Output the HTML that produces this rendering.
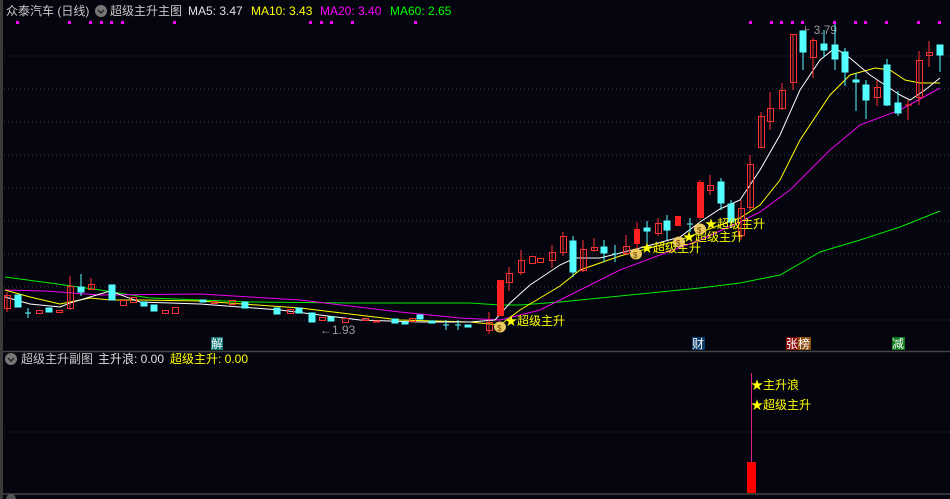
<!DOCTYPE html>
<html><head><meta charset="utf-8"><style>
html,body{margin:0;padding:0;background:#05050f;width:950px;height:499px;overflow:hidden}
svg{display:block}
text{font-family:"Liberation Sans","Noto Sans CJK SC",sans-serif}
</style></head><body>
<svg width="950" height="499" viewBox="0 0 950 499" xmlns="http://www.w3.org/2000/svg">
<rect width="950" height="499" fill="#05050f"/>
<rect x="0" y="0" width="3" height="499" fill="#3a3a3a"/>
<g stroke="#3a3a44" stroke-dasharray="1 3" stroke-width="1">
<line x1="4" y1="56" x2="950" y2="56"/><line x1="4" y1="89" x2="950" y2="89"/><line x1="4" y1="122" x2="950" y2="122"/><line x1="4" y1="155" x2="950" y2="155"/><line x1="4" y1="188" x2="950" y2="188"/><line x1="4" y1="221" x2="950" y2="221"/><line x1="4" y1="254" x2="950" y2="254"/><line x1="4" y1="287" x2="950" y2="287"/><line x1="4" y1="320" x2="950" y2="320"/><line x1="4" y1="432" x2="950" y2="432"/>
</g>
<line x1="3" y1="351.5" x2="950" y2="351.5" stroke="#444" stroke-width="1.5"/>
<line x1="3" y1="494" x2="950" y2="494" stroke="#444" stroke-width="1.5"/>

<!-- header -->
<text x="6" y="15" font-size="12" fill="#c8c8c8">众泰汽车 (日线)</text>
<circle cx="101" cy="11" r="6" fill="#777"/><path d="M98 10 L101 13 L104 10" stroke="#222" stroke-width="1.5" fill="none"/>
<text x="110" y="15" font-size="12" fill="#c8c8c8">超级主升主图</text>
<text x="188" y="15" font-size="12" fill="#e0e0e0">MA5: 3.47</text>
<text x="251" y="15" font-size="12" fill="#ffff00">MA10: 3.43</text>
<text x="320" y="15" font-size="12" fill="#ff00ff">MA20: 3.40</text>
<text x="390" y="15" font-size="12" fill="#00ff00">MA60: 2.65</text>
<g fill="#ff00ff">
<rect x="16" y="21" width="3" height="3"/><rect x="68" y="21" width="3" height="3"/><rect x="89" y="21" width="3" height="3"/><rect x="100" y="21" width="3" height="3"/><rect x="110" y="21" width="3" height="3"/><rect x="121" y="21" width="3" height="3"/><rect x="173" y="21" width="3" height="3"/><rect x="309" y="21" width="3" height="3"/><rect x="320" y="21" width="3" height="3"/><rect x="330" y="21" width="3" height="3"/><rect x="351" y="21" width="3" height="3"/><rect x="414" y="21" width="3" height="3"/>
<rect x="749" y="21" width="3" height="3"/><rect x="770" y="21" width="3" height="3"/><rect x="780" y="21" width="3" height="3"/><rect x="791" y="21" width="3" height="3"/><rect x="801" y="21" width="3" height="3"/><rect x="833" y="21" width="3" height="3"/><rect x="854" y="21" width="3" height="3"/><rect x="864" y="21" width="3" height="3"/><rect x="885" y="21" width="3" height="3"/><rect x="917" y="21" width="3" height="3"/><rect x="938" y="21" width="3" height="3"/>
</g>
<text x="804" y="34" font-size="12" fill="#999">⊦ 3.79</text>
<text x="320" y="334" font-size="12" fill="#999">←1.93</text>

<!-- MA lines -->
<polyline fill="none" stroke="#00ee00" stroke-width="1" points="5,277 50,283 100,290 150,298 250,302 350,303 470,303 500,305 520,305 560,302 600,298 650,293 700,288 740,283 780,275 820,252 860,240 900,227 940,211"/>
<polyline fill="none" stroke="#ee00ee" stroke-width="1" points="5,290 45,291 100,295 200,294 300,300 400,312 460,318 500,320 540,310 580,290 620,270 660,255 700,240 740,222 760,212 790,190 830,150 860,125 900,110 940,88"/>
<polyline fill="none" stroke="#ffff00" stroke-width="1" points="5,290 30,297 60,304 90,298 110,300 140,300 200,301 300,308 400,320 470,322 500,325 520,310 560,286 580,270 620,256 680,240 720,225 740,218 760,205 780,180 800,140 830,95 850,75 875,68 890,70 905,80 920,83 940,83"/>
<polyline fill="none" stroke="#ffffff" stroke-width="1" points="5,297 30,304 60,307 70,303 90,297 110,291 140,302 200,304 280,310 320,315 360,320 420,322 470,322 495,320 510,303 530,285 560,265 575,258 600,258 640,248 680,237 700,222 720,209 740,200 760,170 780,135 800,90 820,60 835,48 850,58 870,75 900,95 910,100 925,90 940,78"/>

<!-- candles: red hollow -->
<g stroke="#ff3232" fill="none" stroke-width="1">
<path d="M7 292V312"/><rect x="4.5" y="295.5" width="6" height="13"/>
<rect x="36.5" y="310.5" width="6" height="3"/><rect x="56.5" y="310.5" width="6" height="2"/>
<path d="M70 276V310"/><rect x="67.5" y="286.5" width="6" height="22"/>
<path d="M91 278V290"/><rect x="88.5" y="284.5" width="6" height="5"/>
<rect x="120.5" y="300.5" width="6" height="5"/><rect x="130.5" y="297.5" width="6" height="5"/>
<rect x="162.5" y="310.5" width="6" height="3"/><rect x="172.5" y="307.5" width="6" height="6"/>
<rect x="211.5" y="301.5" width="6" height="2"/><rect x="229.5" y="300.5" width="6" height="4"/>
<rect x="287.5" y="309.5" width="6" height="4"/><rect x="319.5" y="317.5" width="6" height="3"/>
<rect x="342.5" y="318.5" width="6" height="4"/><rect x="362.5" y="318.5" width="6" height="2"/>
<rect x="373.5" y="321" width="6" height="1"/><rect x="409.5" y="318.5" width="6" height="3"/>
<path d="M489 312V334"/><rect x="486.5" y="322.5" width="6" height="8"/>
<path d="M509 267V291"/><rect x="506.5" y="273.5" width="6" height="9"/>
<path d="M521 250V275"/><rect x="518.5" y="260.5" width="6" height="12"/>
<rect x="529.5" y="256.5" width="6" height="7"/><rect x="537.5" y="258.5" width="6" height="4"/>
<path d="M552 245V268"/><rect x="549.5" y="252.5" width="6" height="8"/>
<path d="M563 232V256"/><rect x="560.5" y="236.5" width="6" height="16"/>
<path d="M583 240V272"/><rect x="580.5" y="249.5" width="6" height="21"/>
<path d="M594 238V252"/><rect x="591.5" y="247.5" width="6" height="3"/>
<path d="M626 235V255"/><rect x="623.5" y="246.5" width="6" height="7"/>
<path d="M658 218V236"/><rect x="655.5" y="223.5" width="6" height="10"/>
<path d="M710 175V195"/><rect x="707.5" y="185.5" width="6" height="5"/>
<path d="M741 200V240"/><rect x="738.5" y="208.5" width="6" height="27"/>
<path d="M750 155V210"/><rect x="747.5" y="164.5" width="6" height="43"/>
<path d="M761 112V148"/><rect x="758.5" y="116.5" width="6" height="31"/>
<path d="M770 92V130"/><rect x="767.5" y="108.5" width="6" height="13"/>
<path d="M782 83V110"/><rect x="779.5" y="90.5" width="6" height="18"/>
<path d="M793 34V90"/><rect x="790.5" y="34.5" width="6" height="48"/>
<path d="M813 38V78"/><rect x="810.5" y="40.5" width="6" height="17"/>
<path d="M877 80V106"/><rect x="874.5" y="87.5" width="6" height="10"/>
<path d="M908 100V120M905 105H912"/>
<path d="M919 51V105"/><rect x="916.5" y="60.5" width="6" height="37"/>
<path d="M929 41V67"/><rect x="926.5" y="52.5" width="6" height="3"/>
</g>
<!-- red filled -->
<g fill="#ff2020">
<rect x="497" y="280" width="7" height="36"/><rect x="634" y="229" width="6" height="15"/><path d="M637 222V250" stroke="#ff2020"/>
<rect x="675" y="216" width="6" height="10"/><rect x="697" y="182" width="7" height="36"/><path d="M700 180V220" stroke="#ff2020"/>
</g>
<!-- cyan -->
<g fill="#54ffff" stroke="#54ffff" stroke-width="1">
<rect x="15" y="295" width="6" height="12"/><path d="M28 308V318M25 313H31" fill="none"/>
<rect x="46" y="308" width="6" height="4"/>
<path d="M81 274V296" fill="none"/><rect x="78" y="287" width="6" height="5"/>
<rect x="109" y="285" width="6" height="15"/><rect x="141" y="302" width="6" height="4"/><rect x="151" y="305" width="6" height="6"/>
<rect x="200" y="300" width="6" height="2"/><rect x="242" y="302" width="6" height="6"/><rect x="274" y="308" width="6" height="6"/>
<rect x="296" y="308" width="6" height="5"/><rect x="309" y="313" width="6" height="9"/><rect x="328" y="317" width="6" height="4"/>
<rect x="392" y="319" width="6" height="4"/><rect x="402" y="322" width="6" height="2"/><rect x="417" y="315" width="6" height="4"/>
<rect x="429" y="321" width="6" height="2"/><path d="M446 320V330M443 325H449M458 320V330M455 325H461" fill="none"/><rect x="465" y="325" width="6" height="2"/>
<path d="M573 236V277" fill="none"/><rect x="570" y="241" width="6" height="31"/>
<path d="M604 240V262" fill="none"/><rect x="601" y="247" width="6" height="6"/>
<path d="M615 245V262M612 254H618" fill="none"/>
<path d="M647 221V245" fill="none"/><rect x="644" y="228" width="6" height="3"/>
<path d="M667 215V240" fill="none"/><rect x="664" y="221" width="6" height="9"/>
<path d="M690 218V232M687 224H693" fill="none"/>
<path d="M721 178V210" fill="none"/><rect x="718" y="182" width="6" height="21"/>
<path d="M731 200V228" fill="none"/><rect x="728" y="204" width="6" height="18"/>
<path d="M803 30V70" fill="none"/><rect x="800" y="31" width="6" height="21"/>
<path d="M824 30V57" fill="none"/><rect x="821" y="44" width="6" height="6"/>
<path d="M835 24V70" fill="none"/><rect x="832" y="45" width="6" height="14"/>
<path d="M845 48V86" fill="none"/><rect x="842" y="52" width="6" height="20"/>
<path d="M856 73V111" fill="none"/><rect x="853" y="80" width="6" height="2"/>
<path d="M866 80V119" fill="none"/><rect x="863" y="85" width="6" height="15"/>
<path d="M887 59V106" fill="none"/><rect x="884" y="65" width="6" height="40"/>
<path d="M898 91V116" fill="none"/><rect x="895" y="103" width="6" height="10"/>
<path d="M940 45V72" fill="none"/><rect x="937" y="45" width="6" height="10"/>
</g>

<!-- signals -->
<g font-size="12" fill="#ffff00">
<g><ellipse cx="500" cy="327" rx="6" ry="5.5" fill="#e8c860"/><text x="497" y="331" font-size="8" fill="#704000">$</text></g>
<text x="505" y="325">★超级主升</text>
<g><ellipse cx="636" cy="254" rx="6" ry="5.5" fill="#e8c860"/><text x="633" y="258" font-size="8" fill="#704000">$</text></g>
<text x="641" y="252">★超级主升</text>
<g><ellipse cx="679" cy="242" rx="6" ry="5.5" fill="#e8c860"/><text x="676" y="246" font-size="8" fill="#704000">$</text></g>
<text x="683" y="241">★超级主升</text>
<g><ellipse cx="700" cy="229" rx="6" ry="5.5" fill="#e8c860"/><text x="697" y="233" font-size="8" fill="#704000">$</text></g>
<text x="705" y="228">★超级主升</text>
</g>

<!-- event tags -->
<rect x="211" y="337" width="12" height="13" fill="#0a7070"/><text x="211" y="348" font-size="12" fill="#fff">解</text>
<rect x="692" y="337" width="13" height="13" fill="#0a3a6a"/><text x="692" y="348" font-size="12" fill="#fff">财</text>
<rect x="786" y="337" width="12" height="13" fill="#8a0a0a"/><rect x="798" y="337" width="13" height="13" fill="#8a4a0a"/><text x="786" y="348" font-size="12" fill="#fff">张榜</text>
<rect x="892" y="337" width="13" height="13" fill="#0a7a1a"/><text x="892" y="348" font-size="12" fill="#fff">减</text>

<!-- sub chart -->
<circle cx="11" cy="359" r="6" fill="#777"/><path d="M8 358 L11 361 L14 358" stroke="#222" stroke-width="1.5" fill="none"/>
<text x="21" y="363" font-size="12" fill="#c8c8c8">超级主升副图</text>
<text x="98" y="363" font-size="12" fill="#e0e0e0">主升浪: 0.00</text>
<text x="170" y="363" font-size="12" fill="#ffff00">超级主升: 0.00</text>
<line x1="751.5" y1="373" x2="751.5" y2="462" stroke="#e0208a" stroke-width="1"/>
<rect x="747" y="462" width="9" height="31" fill="#ff0000"/>
<text x="751" y="389" font-size="12" fill="#ffff00">★主升浪</text>
<text x="751" y="409" font-size="12" fill="#ffff00">★超级主升</text>
<circle cx="11" cy="499" r="5" fill="#555"/>
</svg>
</body></html>
